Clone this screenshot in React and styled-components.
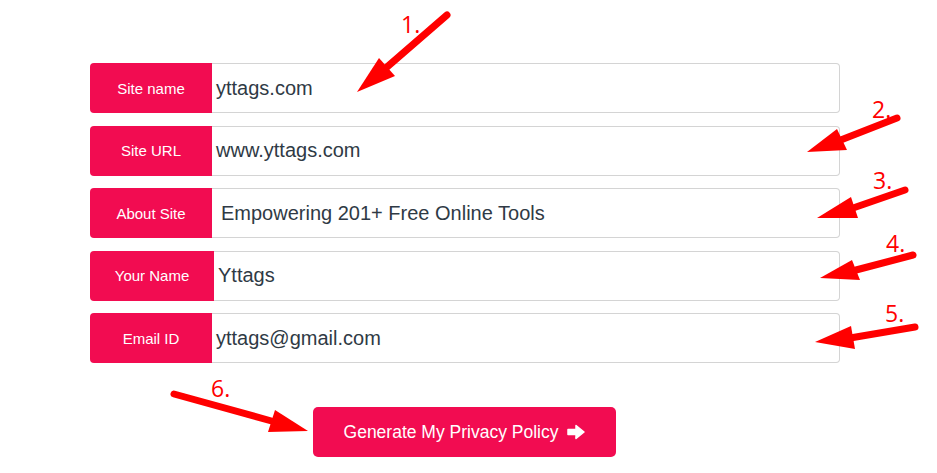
import React from "react";
import styled, { createGlobalStyle } from "styled-components";

const Global = createGlobalStyle`
  html, body { margin: 0; padding: 0; background: #fff; }
  body { font-family: "Liberation Sans", Arial, sans-serif; }
`;

const Page = styled.div`
  position: relative;
  width: 937px;
  height: 473px;
  overflow: hidden;
  background: #fff;
`;

const Form = styled.div`
  display: flex;
  flex-direction: column;
  gap: 12.5px;
  width: 750px;
  padding: 63px 0 0 90px;
`;

const Row = styled.div`
  display: flex;
  height: 50px;
`;

const Label = styled.div`
  flex: 0 0 ${(p) => p.$w || 122}px;
  display: flex;
  align-items: center;
  justify-content: center;
  background: #f20c51;
  color: #fff;
  font-size: 15px;
  border-radius: 4px 0 0 4px;
`;

const Field = styled.div`
  flex: 1;
  display: flex;
  align-items: center;
  box-sizing: border-box;
  border: 1px solid #d4d4d4;
  border-left: none;
  border-radius: 0 4px 4px 0;
  padding-left: ${(p) => p.$pad || 4}px;
  font-size: 20px;
  color: #2f3a45;
`;

const ButtonRow = styled.div`
  display: flex;
  padding: 44px 0 0 313px;
`;

const Button = styled.button`
  width: 303px;
  height: 50px;
  border: none;
  border-radius: 5px;
  background: #f20c51;
  color: #fff;
  font-family: "Liberation Sans", Arial, sans-serif;
  font-size: 17.5px;
  display: flex;
  align-items: center;
  justify-content: center;
  gap: 9px;
`;

const Overlay = styled.svg`
  position: absolute;
  left: 0;
  top: 0;
  pointer-events: none;
`;

const Num = styled.text`
  font-family: "Open Sans", "DejaVu Sans", sans-serif;
  font-weight: 400;
  font-size: 23px;
  fill: #ff0000;
`;

const rows = [
  { label: "Site name", value: "yttags.com" },
  { label: "Site URL", value: "www.yttags.com" },
  { label: "About Site", value: "Empowering 201+ Free Online Tools", pad: 9 },
  { label: "Your Name", value: "Yttags", w: 124 },
  { label: "Email ID", value: "yttags@gmail.com" },
];

function Arrow({ tail, tip, b1, b2 }) {
  const mx = (b1[0] + b2[0]) / 2;
  const my = (b1[1] + b2[1]) / 2;
  return (
    <g>
      <line x1={tail[0]} y1={tail[1]} x2={mx} y2={my} stroke="#ff0000" strokeWidth="7" strokeLinecap="round" />
      <polygon points={`${tip[0]},${tip[1]} ${b1[0]},${b1[1]} ${b2[0]},${b2[1]}`} fill="#ff0000" />
    </g>
  );
}

const arrows = [
  { tail: [447, 15], tip: [357, 92], b1: [379, 58], b2: [395, 76] },
  { tail: [897, 118], tip: [807, 152], b1: [837, 129], b2: [847, 150] },
  { tail: [905, 190], tip: [817, 218], b1: [851, 197], b2: [858, 218] },
  { tail: [913, 255], tip: [820, 278], b1: [852, 260], b2: [860, 280] },
  { tail: [915, 327], tip: [815, 342], b1: [851, 326], b2: [855, 349] },
  { tail: [174, 394], tip: [308, 431], b1: [275, 410], b2: [268, 432] },
];

const nums = [
  { t: "1.", x: 401, y: 33 },
  { t: "2.", x: 872, y: 118 },
  { t: "3.", x: 873, y: 189 },
  { t: "4.", x: 886, y: 252 },
  { t: "5.", x: 885, y: 322 },
  { t: "6.", x: 211, y: 397 },
];

export default function App() {
  return (
    <Page>
      <Global />
      <Form>
        {rows.map((r) => (
          <Row key={r.label}>
            <Label $w={r.w}>{r.label}</Label>
            <Field $pad={r.pad}>{r.value}</Field>
          </Row>
        ))}
      </Form>
      <ButtonRow>
        <Button>
          Generate My Privacy Policy
          <svg width="18" height="16" viewBox="0 0 18 16">
            <path d="M1 5.5h8V1.5l8 6.5-8 6.5v-4H1z" fill="#fff" stroke="#fff" strokeWidth="1.5" strokeLinejoin="round" />
          </svg>
        </Button>
      </ButtonRow>
      <Overlay width="937" height="473" viewBox="0 0 937 473">
        {arrows.map((a, i) => (
          <Arrow key={i} {...a} />
        ))}
        {nums.map((n) => (
          <Num key={n.t} x={n.x} y={n.y}>{n.t}</Num>
        ))}
      </Overlay>
    </Page>
  );
}
